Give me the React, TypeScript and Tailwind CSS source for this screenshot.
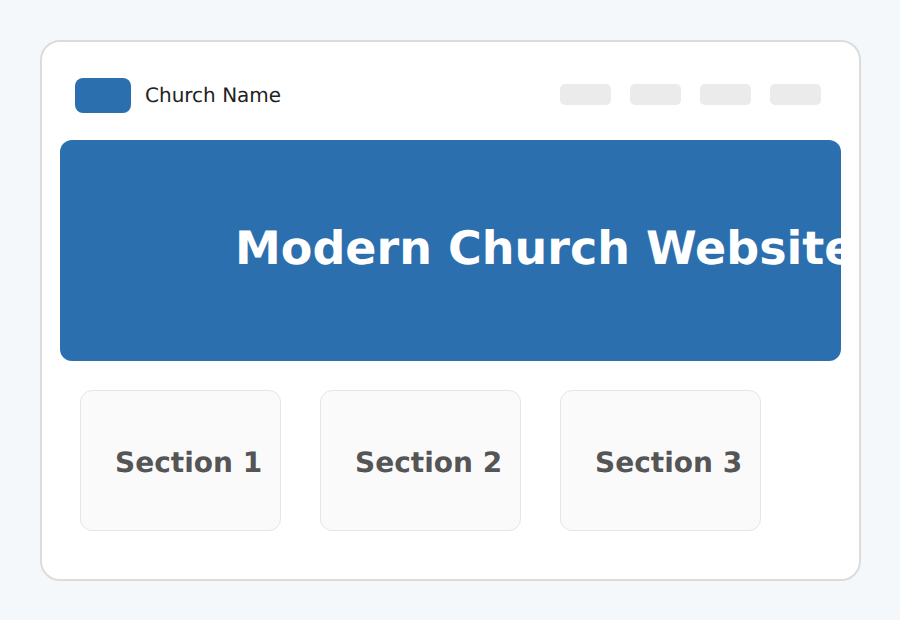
const sections = ['Section 1', 'Section 2', 'Section 3'];

const App = () => {
  return (
    <div className="w-[900px] h-[620px] bg-[#f5f8fb] pt-10 pl-10 font-['DejaVu_Sans',sans-serif] [text-rendering:geometricPrecision]">
      <div className="w-[821px] h-[541px] bg-white border-2 border-[#dcdcdc] rounded-[20px] pl-[18px] pt-9">
        {/* header */}
        <div className="flex items-center h-[35px] pl-[15px] w-[781px]">
          <div className="w-14 h-[35px] bg-[#2b6fae] rounded-lg" />
          <span className="ml-3.5 mb-0.5 text-xl leading-none text-[#222222]">Church Name</span>
          <nav className="ml-auto mr-5 mb-0.5 flex gap-[19px]">
            {[0, 1, 2, 3].map((i) => (
              <div key={i} className="w-[51px] h-[21px] bg-[#ebebeb] rounded-[5px]" />
            ))}
          </nav>
        </div>

        {/* hero, the title runs past the right edge like the original */}
        <div className="mt-[27px] w-[781px] h-[221px] bg-[#2b6fae] rounded-xl flex items-center pl-[175px] pb-[5px]">
          <h1 className="text-[46px] leading-none font-bold text-white whitespace-nowrap">Modern Church Website</h1>
        </div>

        {/* sections */}
        <div className="mt-[29px] pl-5 flex gap-[39px]">
          {sections.map((s) => (
            <div key={s} className="w-[201px] h-[141px] bg-[#fafafa] border border-[#e6e6e6] rounded-xl flex items-center pl-[34px] pt-1">
              <span className="text-[28px] leading-none font-bold text-[#555555] whitespace-nowrap">{s}</span>
            </div>
          ))}
        </div>
      </div>
    </div>
  );
};

export default App;
